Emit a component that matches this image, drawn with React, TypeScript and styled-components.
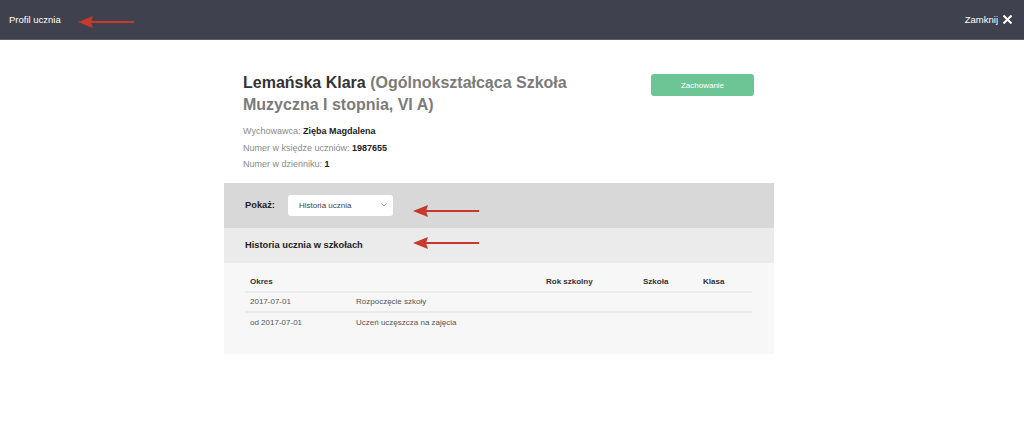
import * as React from "react";
import styled, { createGlobalStyle } from "styled-components";

interface HistoryRow {
  id: string;
  period: string;
  event: string;
  year: string;
  school: string;
  className: string;
}

const rows: HistoryRow[] = [
  { id: "1", period: "2017-07-01", event: "Rozpoczęcie szkoły", year: "", school: "", className: "" },
  { id: "2", period: "od 2017-07-01", event: "Uczeń uczęszcza na zajęcia", year: "", school: "", className: "" },
];

const GlobalStyle = createGlobalStyle`
  html, body {
    margin: 0;
    padding: 0;
    background: #ffffff;
    font-family: "Liberation Sans", Arial, sans-serif;
  }
`;

const TopBar = styled.header`
  position: relative;
  height: 40px;
  background: #3f414e;
  border-bottom: 1px solid #5b5d68;
  box-sizing: border-box;
  display: flex;
  align-items: center;
  justify-content: space-between;
  padding: 0 12px 0 9px;
  color: #ffffff;
  font-size: 9.5px;
`;

const CloseButton = styled.button`
  display: flex;
  align-items: center;
  gap: 5px;
  background: none;
  border: 0;
  padding: 0;
  color: #ffffff;
  font: inherit;
  cursor: pointer;
`;

const Arrow = styled.svg<{ $left: number; $top: number }>`
  position: absolute;
  left: ${(p) => p.$left}px;
  top: ${(p) => p.$top}px;
  pointer-events: none;
`;

const Column = styled.main`
  width: 550px;
  margin-left: calc(50% - 288px);
  padding-top: 32px;
`;

const Profile = styled.section`
  display: flex;
  justify-content: space-between;
  align-items: flex-start;
  padding: 0 20px 10px 19px;
`;

const Title = styled.h1`
  margin: 0;
  width: 330px;
  font-size: 16px;
  line-height: 22px;
  font-weight: bold;
  color: #333333;
`;

const Sub = styled.span`
  color: #7b7b7b;
`;

const InfoList = styled.div`
  margin-top: 7px;
`;

const InfoLine = styled.div`
  font-size: 9px;
  line-height: 16.5px;
  color: #8a8a8a;

  b {
    color: #222222;
  }
`;

const ActionButton = styled.button`
  margin-top: 2px;
  width: 103px;
  height: 22px;
  border: 0;
  border-radius: 3px;
  background: #6dc596;
  color: #ffffff;
  font-family: inherit;
  font-size: 8px;
`;

const Band = styled.div<{ $tone: string; $height: number }>`
  position: relative;
  display: flex;
  align-items: center;
  height: ${(p) => p.$height}px;
  background: ${(p) => p.$tone};
  padding-left: 21px;
  font-size: 9.3px;
  font-weight: bold;
  color: #222222;
`;

const Select = styled.div`
  display: flex;
  align-items: center;
  justify-content: space-between;
  margin-left: 13px;
  width: 105px;
  height: 21px;
  box-sizing: border-box;
  padding: 0 6px 0 11px;
  background: #ffffff;
  border-radius: 3px;
  font-size: 8px;
  font-weight: normal;
  color: #444444;
`;

const TableArea = styled.section`
  background: #f7f7f7;
  padding: 10px 22px 21px 21px;
`;

const Row = styled.div<{ $head?: boolean }>`
  display: grid;
  grid-template-columns: 106px 190px 97px 60px 1fr;
  box-sizing: border-box;
  height: 20px;
  align-items: center;
  border-bottom: 2px solid #ebebeb;
  font-size: 8px;
  font-weight: ${(p) => (p.$head ? "bold" : "normal")};
  color: ${(p) => (p.$head ? "#333333" : "#555555")};

  &:last-child {
    border-bottom: 0;
  }
`;

const Cell = styled.span`
  padding-left: 5px;
  white-space: nowrap;
`;

const RedArrow = ({ left, top, width }: { left: number; top: number; width: number }) => (
  <Arrow $left={left} $top={top} width={width} height={14} viewBox={`0 0 ${width} 14`}>
    <line x1={10} y1={7} x2={width} y2={7} stroke="#c63a2b" strokeWidth={2.2} />
    <polygon points={`0,7 15,1 13,7 15,13`} fill="#c63a2b" />
  </Arrow>
);

export default () => {
  return (
    <>
      <GlobalStyle />
      <TopBar>
        <span>Profil ucznia</span>
        <RedArrow left={78} top={15} width={56} />
        <CloseButton>
          Zamknij
          <svg width="9" height="9" viewBox="0 0 9 9">
            <path d="M1.2 1.2 L7.8 7.8 M7.8 1.2 L1.2 7.8" stroke="#ffffff" strokeWidth="2" strokeLinecap="square" />
          </svg>
        </CloseButton>
      </TopBar>
      <Column>
        <Profile>
          <div>
            <Title>
              Lemańska Klara <Sub>(Ogólnokształcąca Szkoła</Sub>
              <br />
              <Sub>Muzyczna I stopnia, VI A)</Sub>
            </Title>
            <InfoList>
              <InfoLine>
                Wychowawca: <b>Zięba Magdalena</b>
              </InfoLine>
              <InfoLine>
                Numer w księdze uczniów: <b>1987655</b>
              </InfoLine>
              <InfoLine>
                Numer w dzienniku: <b>1</b>
              </InfoLine>
            </InfoList>
          </div>
          <ActionButton>Zachowanie</ActionButton>
        </Profile>
        <Band $tone="#d8d8d8" $height={45}>
          Pokaż:
          <Select>
            Historia ucznia
            <svg width="6" height="4" viewBox="0 0 6 4">
              <polyline points="0.5,0.5 3,3 5.5,0.5" fill="none" stroke="#9a9a9a" strokeWidth="0.9" />
            </svg>
          </Select>
          <RedArrow left={189} top={21} width={66} />
        </Band>
        <Band $tone="#ebebeb" $height={35}>
          Historia ucznia w szkołach
          <RedArrow left={189} top={8} width={66} />
        </Band>
        <TableArea>
          <Row $head>
            <Cell>Okres</Cell>
            <Cell />
            <Cell>Rok szkolny</Cell>
            <Cell>Szkoła</Cell>
            <Cell>Klasa</Cell>
          </Row>
          {rows.map((r) => (
            <Row key={r.id}>
              <Cell>{r.period}</Cell>
              <Cell>{r.event}</Cell>
              <Cell>{r.year}</Cell>
              <Cell>{r.school}</Cell>
              <Cell>{r.className}</Cell>
            </Row>
          ))}
        </TableArea>
      </Column>
    </>
  );
};
